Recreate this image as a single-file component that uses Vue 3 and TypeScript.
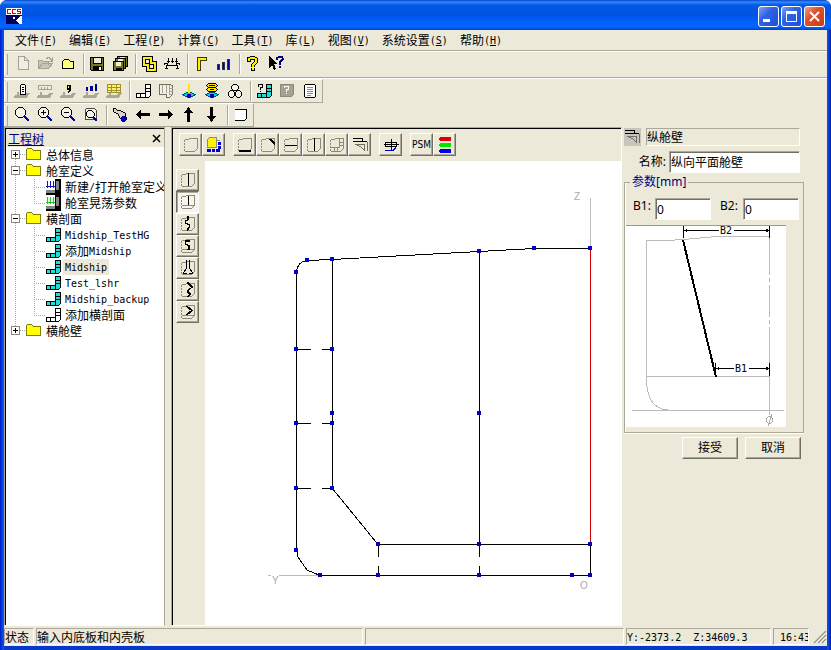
<script setup lang="ts">
import { h, ref } from 'vue'

// fill, stroke, stroke width, path data, optional dash pattern
type Shape = [string, string, number, string, string?]

const K = '#000'
const G = '#a5a294'
const N = 'none'
const Y = '#ffff00'
const B = '#0000a8'
const C = '#00d8d8'

const tray: Shape = ['#aaa794', N, 0, 'M3 9h2v3h6l1-2h4l-3 5H0l1-3h2z']
const lens: Shape[] = [
  [N, B, 2, 'M10 9l5 5'],
  ['#f4f3ea', K, 1, 'M4.500 .5h4l3 3v4l-3 3h-4l-3-3v-4z'],
]
const cellPath = 'M10.500 1.500h5v11l-2 2h-12v-4h9z'
const cellLines: Shape = [N, K, 1, 'M10.500 5.500h5M10.500 8.500h5M10.500 10.500v4M5.500 10.500v4']
const cell: Shape[] = [['#20dcdc', K, 1, cellPath], cellLines]
const whiteCell: Shape[] = [['#fff', K, 1, cellPath], cellLines]
const hull: Shape[] = [
  [N, '#8e8b7c', 1, 'M1.500 3v12', '2 1'],
  [N, '#8e8b7c', 1, 'M2 2.500h4M6 1.500h8.500v10l-3 3H2'],
]
const floor: Shape = [N, '#8e8b7c', 1, 'M2 11.500h12']

const icons: Record<string, Shape[]> = {
  app: [
    ['#fff', N, 0, 'M0 0h16v7H0z'],
    [N, '#e00000', 1, 'M5 1.500H1.500v4H5M10 1.500H6.500v4H10M15 1.500h-3.500v2h3v2H11'],
    ['#00005c', N, 0, 'M0 7h16v9H0z'],
    ['#fff', N, 0, 'M16 8v8h-2l-5-4 3-1 2-3zM7 9h2v2H7z'],
  ],
  file: [['#f0eee4', G, 1, 'M4.500 .5h6l4 4v9h-10zM10.500 .5v4h4']],
  open: [['#c9c6b7', G, 1, 'M1.500 12.500v-8h4l1 1h5v3M1.500 12.500l4-5h10l-4 5z'], [N, G, 1, 'M9 2.500l3-1 3 3M15 1v4h-3']],
  folder: [['#ffff80', K, 1, 'M2.500 12.500v-7l2-2h4l2 2h3v7z']],
  save: [
    ['#77771d', K, 1, 'M1.500 1.500h13v13h-12l-1-1z'],
    ['#eeeade', K, 1, 'M4.500 1.500h8v6h-8z'],
    [K, N, 0, 'M4 10h9v5H4z'],
    ['#fff', N, 0, 'M10 11h2v3h-2z'],
  ],
  saveAll: [
    ['#77771d', K, 1, 'M5.500 .5h10v10h-10z'],
    ['#77771d', K, 1, 'M3.500 2.500h10v10h-10z'],
    ['#77771d', K, 1, 'M1.500 5.500h10v9h-10z'],
    ['#f0eee4', N, 0, 'M8 1h5v1H8zM6 3h5v2H6zM4 6h5v4H4z'],
    [K, N, 0, 'M4 12h6v3H4z'],
  ],
  ribbon: [
    [N, K, 4, 'M3 2h7v5h4v7H7v-5H3z'],
    [N, '#f4ed24', 2, 'M3 2h7v5h4v7H7v-5H3z'],
  ],
  loads: [
    [N, K, 1, 'M.5 9V7.500h3v2h9v-2h3V9M2 9.500h12M2.500 9v4M13.500 9v4M1 12.500h3M12 12.500h3'],
    [N, K, 1, 'M4.500 2v5M8.500 2v5M12.500 2v5M3 5.500h3M7 5.500h3M11 5.500h3'],
  ],
  angle: [['#fff200', '#3c3c00', 1, 'M4.500 1.500h9v3h-6v10h-3z']],
  bars: [['#00009c', '#30304c', 1, 'M1.500 8.500h2v5h-2zM6.500 6.500h2v7h-2zM11.500 3.500h2v10h-2z']],
  help: [
    [N, K, 4, 'M4 6V3l2-1h3l2 1v3l-3 3v2M8 12v3'],
    [N, '#fff200', 2, 'M4 5V3l2-1h3l2 1v3l-3 3v2M8 12v2'],
  ],
  whatsThis: [
    [K, N, 0, 'M1 0l8 8H6l2 5-2 1-2-5-3 3z'],
    [N, '#000080', 2, 'M9 4V2l2-1h3l1 2-3 3v3M12 10v2'],
  ],
  trayDoc: [tray, ['#fff', K, 1, 'M6.500 2.500l1-1h3l1 1v9h-5zM8 4.500h2M8 6.500h2M8 8.500h2']],
  trayRuler: [tray, ['#eceadf', G, 1, 'M1.500 2.500h13v4h-13zM4.500 4v2M7.500 4v2M10.500 4v2']],
  trayNine: [tray, [K, N, 0, 'M7 2h4v5L8 10V8l1-1H7V5z'], [Y, N, 0, 'M8 3h1v2H8z']],
  trayBars: [tray, ['#000090', N, 0, 'M3 4h2v4H3zM7 3h3v5H7zM12 1h2v7h-2z']],
  trayTable: [tray, ['#fff36b', '#9d902d', 1, 'M1.500 1.500h13v8h-13zM1.500 4.500h13M1.500 7.500h13M5.500 1.500v8M10.500 1.500v8']],
  section: whiteCell,
  hullGray: [['#f2f0e8', '#716f64', 1, 'M1.500 1.500h10l3 1v9l-3 3h-3v-3h-7z'], [N, G, 1, 'M4.500 2v8M8.500 2v8M11.500 2v9h3M12 5.500h3M12 8.500h3']],
  beam: [
    [C, '#004c70', 1, 'M6.500 9.500h3l5 2-5 3h-3l-5-3z'],
    ['#ffe600', N, 0, 'M7 1h2v9H7z'],
    ['#0000c0', N, 0, 'M6 11h4v2l-1 2H7l-1-2z'],
  ],
  waves: [
    [C, '#004c70', 1, 'M6.500 9.500h3l5 2-5 3h-3l-5-3z'],
    ['#ffe600', K, 1, 'M4.500 4.500h7l2 2-2 2h-7l-2-2z'],
    ['#ffe600', K, 1, 'M4.500 .5h7l2 2-2 2h-7l-2-2z'],
    [N, K, 1, 'M5 2.500h6M6 6.500h4'],
    ['#0000c0', N, 0, 'M6 11h4v2l-1 2H7l-1-2z'],
  ],
  rings: [['#f4f3ea', K, 1, 'M6.500 1.500h3l2 2v2l-2 2h-3l-2-2v-2zM3.500 7.500h2l2 2v3l-2 2h-2l-2-2v-3zM10.500 7.500h2l2 2v3l-2 2h-2l-2-2v-3z']],
  askCell: [...cell, [N, K, 1, 'M2.500 4V1.500h4v3h-2V7M4.500 8v1']],
  askGray: [['#a5a294', '#8e8b7c', 1, 'M1.500 1.500h13v10l-2 2h-11z'], [N, '#fff', 1, 'M5.500 5V3.500h4v3h-2V9M7.500 10v1']],
  sheet: [['#fff', K, 1, 'M3.500 1.500h9l1 1v11l-1 1h-9l-1-1v-11z'], [N, '#8e8b7c', 1, 'M5 4.500h6M5 6.500h6M5 8.500h6M5 10.500h6M5 12.500h4']],
  zoom: lens,
  zoomIn: [...lens, [N, K, 1, 'M4 5.500h5M6.500 3v5']],
  zoomOut: [...lens, [N, K, 1, 'M4 5.500h5']],
  zoomFit: [
    ['#f4f3ea', '#4c4a42', 1, 'M3.500 1.500h8l2 2v9h-11v-10z'],
    [N, B, 2, 'M10 10l4 4'],
    ['#f4f3ea', K, 1, 'M5.500 3.500h3l3 3v2l-2 2h-4l-2-2v-3z'],
  ],
  pan: [['#d9d7cb', K, 1, 'M1.500 1.500h2l2 2h3l5 3v3l-3 3-3-2-1-3-5-3z'], ['#0000c8', '#000080', 1, 'M10.500 9.500h3l1 1v2l-2 2h-2l-1-1v-3z']],
  left: [[K, N, 0, 'M1 7.500L6 3v3h9v3H6v3z']],
  right: [[K, N, 0, 'M15 7.500L10 3v3H1v3h9v3z']],
  up: [[K, N, 0, 'M7.500 0L12 6H9v9H6V6H3z']],
  down: [[K, N, 0, 'M7.500 15L12 9H9V0H6v9H3z']],
  outline: [['#fff', K, 1, 'M2 2.500h11.500v9l-2 2H2']],
  hull: hull,
  hullFill: [
    ['#fff200', '#8e8b7c', 1, 'M1.500 2.500l2-2h7v10h-9z'],
    [N, '#8e8b7c', 1, 'M10 3.500h4'],
    ['#0000d0', N, 0, 'M12 5h3v3h-3zM12 9h3v3h-3zM10 12h4v3h-4zM6 12h3v3H6zM1 12h4v3H1z'],
  ],
  deckBottom: [...hull, [K, N, 0, 'M2 13h12v2H2z']],
  deckCorner: [...hull, [K, N, 0, 'M9 2h2l4 4v2h-1l-5-5z']],
  deckMid: [...hull, [N, K, 1, 'M2 8.500h12']],
  wall: [...hull, [N, K, 1, 'M8.500 1v13']],
  hullCells: [...hull, [N, '#8e8b7c', 1, 'M10.500 2v8.500H2M11 5.500h4M11 8.500h4M5.500 11v3M8.500 11v3']],
  bracket: [[N, K, 1, 'M1 1.500h9v3h5M1 4.500h9'], [N, '#716f64', 1, 'M3.500 7.500h9v6l-4-4-5-2M15.500 5v9']],
  girder: [[N, K, 1, 'M2.500 5.500h11v4h-11zM1 7.500h15M8.500 2v12'], [N, '#0000c0', 1, 'M2 13.500h8l3-3']],
  rgb: [['#e00000', N, 0, 'M3 0h10l1 1v2l-1 1H3L2 3V1z'], ['#00e800', N, 0, 'M3 6h10l1 1v2l-1 1H3L2 9V7z'], ['#0000d8', N, 0, 'M3 12h10l1 1v2l-1 1H3l-1-1v-2z']],
  wallFloor: [...hull, floor, [N, K, 1, 'M8.500 2v9']],
  corrugated: [...hull, [N, K, 1, 'M7.500 0v4.500h-2v3l4 1v3l-2 1V15M8.500 0v4M8.500 12v2']],
  corrugatedFloor: [...hull, floor, [N, K, 1, 'M9.500 2.500h-4v4l4 1v4h-3M10 3.500H6M8.500 8v3']],
  stool: [...hull, [N, K, 1, 'M6.500 0v8l-3 5M9.500 0v8l3 5M3 13.500h4M9 13.500h4']],
  chain: [...hull, [N, K, 1, 'M7.500 0l5 5-5 4 3 3-3 3M7.500 1l4 4M10 6l-3 3 2 3']],
  chainFloor: [...hull, floor, [N, K, 1, 'M6.500 2.500l5 4-5 4M7.500 2.500l5 4-5 4']],
  closedFolder: [['#ffff00', '#817c10', 1, 'M.5 12.500v-10l1-1h4l2 2h7v9z']],
  tankBlue: [[K, N, 0, 'M10 0h6v16H1v-5h9z'], ['#858585', N, 0, 'M11 2h3v9h-3zM1 11h9v3H1z'], [N, '#1414c0', 1, 'M2.500 2v7M5.500 2v7M8.500 2v7M1 7.500h9']],
  tankGreen: [[K, N, 0, 'M10 0h6v16H1v-5h9z'], ['#858585', N, 0, 'M11 2h3v9h-3zM1 11h9v3H1z'], [N, '#18cc18', 1, 'M2.500 2v7M5.500 2v7M8.500 2v7M1 7.500h9']],
  cell,
  whiteCell,
}

const Icon = (props: { name: string }) =>
  h(
    'svg',
    { width: 16, height: 16, viewBox: '0 0 16 16', 'shape-rendering': 'crispEdges', 'aria-hidden': 'true' },
    (icons[props.name] ?? []).map(([fill, stroke, width, d, dash]) =>
      h('path', { d, fill, stroke, 'stroke-width': width, 'stroke-dasharray': dash || undefined }),
    ),
  )
Icon.props = ['name']

// Latin runs are set at half the width of a Chinese character.
const Txt = (props: { text: string }) =>
  h(
    'span',
    (props.text.match(/[\x20-\x7e]+|[^\x20-\x7e]+/g) ?? []).map((run) =>
      /^[\x20-\x7e]/.test(run) ? h('span', { class: 'half' }, run) : run,
    ),
  )
Txt.props = ['text']

const menus = [
  ['文件', 'F'], ['编辑', 'E'], ['工程', 'P'], ['计算', 'C'], ['工具', 'T'],
  ['库', 'L'], ['视图', 'V'], ['系统设置', 'S'], ['帮助', 'H'],
]

const toolbars: { boxed: boolean; groups: string[][] }[] = [
  { boxed: false, groups: [['file', 'open', 'folder'], ['save', 'saveAll'], ['ribbon', 'loads'], ['angle', 'bars'], ['help', 'whatsThis']] },
  { boxed: true, groups: [['trayDoc', 'trayRuler', 'trayNine', 'trayBars', 'trayTable'], ['section', 'hullGray', 'beam', 'waves', 'rings'], ['askCell', 'askGray', 'sheet']] },
  { boxed: true, groups: [['zoom', 'zoomIn', 'zoomOut', 'zoomFit'], ['pan', 'left', 'right', 'up', 'down'], ['outline']] },
]

const viewTools = [['hull', 'hullFill'], ['deckBottom', 'deckCorner', 'deckMid', 'wall', 'hullCells', 'bracket'], ['girder'], ['PSM', 'rgb']]
const sideTools = ['wall', 'wallFloor', 'corrugated', 'corrugatedFloor', 'stool', 'chain', 'chainFloor']
const activeTool = ref('wallFloor')

interface Leaf { label: string; icon: string }
const tree: { label: string; open: boolean; items: Leaf[] }[] = [
  { label: '总体信息', open: false, items: [] },
  { label: '舱室定义', open: true, items: [{ label: '新建/打开舱室定义', icon: 'tankBlue' }, { label: '舱室晃荡参数', icon: 'tankGreen' }] },
  {
    label: '横剖面',
    open: true,
    items: [
      { label: 'Midship_TestHG', icon: 'cell' },
      { label: '添加Midship', icon: 'cell' },
      { label: 'Midship', icon: 'cell' },
      { label: 'Test_lshr', icon: 'cell' },
      { label: 'Midship_backup', icon: 'cell' },
      { label: '添加横剖面', icon: 'whiteCell' },
    ],
  },
  { label: '横舱壁', open: false, items: [] },
]
const selected = ref('Midship')

const points = [
  [307, 260], [332, 259], [296, 272], [479, 251], [534, 248], [590, 248],
  [296, 349], [332, 349], [332, 413], [479, 413], [296, 423], [332, 423],
  [296, 488], [332, 488], [296, 550], [320, 575], [378, 544], [479, 544],
  [590, 544], [378, 575], [479, 575], [572, 575], [590, 575],
]

const name = ref('纵向平面舱壁')
const b1 = ref('0')
const b2 = ref('0')
</script>

<template>
  <div class="window">
    <header class="title">
      <Icon name="app" />
      <div class="caption">
        <button type="button" aria-label="最小化"><svg width="19" height="19" viewBox="0 0 19 19"><path d="M4 12h7v3H4z" fill="#fff" /></svg></button>
        <button type="button" aria-label="最大化"><svg width="19" height="19" viewBox="0 0 19 19"><path d="M4.500 5v9.500h10V5" fill="none" stroke="#fff" /><path d="M4 4h11v3H4z" fill="#fff" /></svg></button>
        <button type="button" class="close" aria-label="关闭"><svg width="19" height="19" viewBox="0 0 19 19"><path d="M5 5l9 9M14 5l-9 9" stroke="#fff" stroke-width="2" /></svg></button>
      </div>
    </header>

    <div class="client">
      <nav class="menu">
        <button v-for="m in menus" :key="m[1]" type="button">{{ m[0] }}<span class="half">(<u>{{ m[1] }}</u>)</span></button>
      </nav>

      <div v-for="(bar, i) in toolbars" :key="i" class="toolbar" :class="{ boxed: bar.boxed }" role="toolbar">
        <div v-for="(group, j) in bar.groups" :key="j" class="group">
          <button v-for="t in group" :key="t" type="button" :aria-label="t"><Icon :name="t" /></button>
        </div>
      </div>

      <main class="work">
        <aside class="tree">
          <div class="tree-head">
            <a href="#">工程树</a>
            <button type="button" aria-label="关闭工程树"><svg width="9" height="9" viewBox="0 0 9 9"><path d="M1 1l7 7M8 1l-7 7" stroke="#000" stroke-width="1.500" /></svg></button>
          </div>
          <ul class="nodes">
            <li v-for="(node, i) in tree" :key="node.label" :class="{ linked: i < tree.length - 1 }">
              <div class="node">
                <svg class="toggle" width="19" height="16" viewBox="0 0 19 16" shape-rendering="crispEdges">
                  <path d="M13 7.500h6" stroke="#aaa" stroke-dasharray="1 1" />
                  <path d="M4.500 3.500h8v8h-8z" fill="#fff" stroke="#8e8b7c" />
                  <path :d="node.open ? 'M6 7.500h5' : 'M6 7.500h5M8.500 5v5'" stroke="#000" />
                </svg>
                <Icon name="closedFolder" />
                <Txt class="label" :text="node.label" />
              </div>
              <ul v-if="node.items.length">
                <li v-for="leaf in node.items" :key="leaf.label" class="leaf" @click="selected = leaf.label">
                  <Icon :name="leaf.icon" />
                  <Txt class="label" :class="{ selected: selected === leaf.label }" :text="leaf.label" />
                </li>
              </ul>
            </li>
          </ul>
        </aside>

        <section class="view">
          <div class="view-tools">
            <div v-for="(group, i) in viewTools" :key="i" class="view-group">
              <button v-for="t in group" :key="t" type="button" class="tool" :aria-label="t">
                <span v-if="t === 'PSM'" class="psm">PSM</span>
                <Icon v-else :name="t" />
              </button>
            </div>
          </div>
          <div class="view-body">
            <div class="side-tools">
              <button v-for="t in sideTools" :key="t" type="button" class="tool" :class="{ pressed: activeTool === t }" :aria-label="t" @click="activeTool = t">
                <Icon :name="t" />
              </button>
            </div>
            <div class="canvas">
              <svg width="416" height="464" viewBox="205 161 416 464" shape-rendering="crispEdges" fill="none">
                <path d="M590.500 198v50M268 575.500h3M279 575.500h42" stroke="#bbb" />
                <g fill="#aaa" class="axis">
                  <text x="574" y="200">Z</text><text x="272" y="584">Y</text><text x="580" y="589">O</text>
                </g>
                <path d="M590.500 248v296" stroke="#d00000" />
                <path
                  d="M296.500 272v278M332.500 259v229M479.500 251v306M479.500 566v9M378.500 544v13M378.500 566v9M590.500 544v31M378 544.500h212M320 575.500h270M534 248.500h56M307 260.500L332 259.500L479 251.500L534 248.500M296.500 272Q297 262 307 260.500M296.500 550L298 557L307 570L320 575.500M332 488L378 544.500M296 349.500h15M322 349.500h10M296 423.500h15M322 423.500h10M296 488.500h15M322 488.500h10"
                  stroke="#000"
                />
                <rect v-for="(p, i) in points" :key="i" :x="p[0] - 2" :y="p[1] - 2" width="4" height="4" fill="#0000c8" />
              </svg>
            </div>
          </div>
        </section>

        <aside class="props">
          <div class="props-head">
            <span class="props-icon"><Icon name="bracket" /></span>
            <span class="props-title">纵舱壁</span>
          </div>
          <div class="name-row">
            <label for="name">名称:</label>
            <input id="name" v-model="name" type="text" />
          </div>
          <fieldset>
            <legend>参数[mm]</legend>
            <div class="dims">
              <label for="b1">B1:</label>
              <input id="b1" v-model="b1" type="text" />
              <label for="b2">B2:</label>
              <input id="b2" v-model="b2" type="text" />
            </div>
            <svg class="sketch" width="160" height="202" viewBox="626 225 160 202" shape-rendering="crispEdges" fill="none">
              <path d="M626 225.500h160" stroke="#999" />
              <path d="M646.500 240v142c1 18 9 27 21 28M646 240.500h22l15-1 34-3h53M646 376.500h124M632 410.500h152" stroke="#bbb" />
              <path d="M769.500 237v38M769.500 278v4M769.500 285v32M769.500 320v4M769.500 327v88" stroke="#bbb" />
              <path d="M683.500 226v12M769.500 226v12M683 230.500h36M734 230.500h36M715.500 363v13M769.500 363v13M716 368.500h18M749 368.500h21" stroke="#000" />
              <path d="M684 230.500l3-2v4zM769 230.500l-3-2v4zM716 368.500l3-2v4zM769 368.500l-3-2v4z" fill="#000" />
              <path d="M683 240L716 377" stroke="#000" stroke-width="2" />
              <g fill="#000" class="dim"><text x="720" y="234">B2</text><text x="735" y="372">B1</text></g>
              <path d="M768.500 416.500h2l2 2v3l-2 2h-2l-2-2v-3zM772 414l-4 12" stroke="#aaa" />
            </svg>
          </fieldset>
          <div class="actions">
            <button type="button">接受</button>
            <button type="button">取消</button>
          </div>
        </aside>
      </main>

      <footer class="status">
        <span>状态</span>
        <span>输入内底板和内壳板</span>
        <span></span>
        <span class="coords"><Txt text="Y:-2373.2  Z:34609.3" /></span>
        <span class="clock"><Txt text="16:43" /></span>
        <svg width="16" height="16" viewBox="0 0 16 16"><path d="M3 15L15 3M7 15l8-8M11 15l4-4" stroke="#9d9a8a" stroke-width="1.500" /><path d="M5 15L15 5M9 15l6-6M13 15l2-2" stroke="#fff" /></svg>
      </footer>
    </div>
  </div>
</template>

<style>
body {
  margin: 0;
  background: #fff;
}
.half {
  font-family: "DejaVu Sans Mono", monospace;
  font-size: 10px;
  line-height: 12px;
  vertical-align: 1px;
  white-space: pre;
}
</style>

<style scoped>
* {
  box-sizing: border-box;
}
.window {
  height: 100vh;
  min-height: 500px;
  display: flex;
  flex-direction: column;
  overflow: hidden;
  border-radius: 7px 7px 0 0;
  background: linear-gradient(90deg, #0019cf, #0a50e8 3px, #0a50e8 calc(100% - 3px), #0019a8);
  font: 12px/16px "Noto Sans CJK SC", sans-serif;
  color: #000;
}
button {
  font: inherit;
  color: inherit;
  padding: 0;
  border: 0;
  background: none;
}
svg {
  display: block;
  flex: none;
}
ul {
  margin: 0;
  padding: 0;
  list-style: none;
}
.title {
  flex: none;
  height: 30px;
  padding: 2px 6px 0 6px;
  display: flex;
  align-items: center;
  justify-content: space-between;
  background: linear-gradient(#0842c8, #2f8cff 2px, #0558e4 5px, #0052e0 14px, #0062ff 22px, #0066ff 27px, #0040c8);
}
.caption {
  display: flex;
  gap: 2px;
}
.caption button {
  width: 21px;
  height: 21px;
  border: 1px solid #fff;
  border-radius: 3px;
  background: linear-gradient(135deg, #7ea2f4, #2f62e4 40%, #1c4fd8);
}
.caption .close {
  background: linear-gradient(135deg, #f0a084, #e0502c 40%, #c83c14);
}
.client {
  flex: 1;
  min-height: 0;
  margin: 0 4px 4px;
  display: flex;
  flex-direction: column;
  background: #ece9d8;
  box-shadow: 0 4px #0838c8;
}
.menu {
  flex: none;
  display: flex;
  height: 22px;
  padding: 1px 5px 0;
  border-bottom: 1px solid #fff;
  box-shadow: inset 0 -1px #aca899;
}
.menu button {
  height: 18px;
  padding: 0 6px;
  white-space: nowrap;
}
.toolbar {
  flex: none;
  display: flex;
  height: 27px;
  padding: 0 0 2px 7px;
  border-bottom: 1px solid #fff;
  background: linear-gradient(90deg, #fff 1px, transparent 1px 3px, #aca899 3px 4px, transparent 4px) 0 2px / 100% 21px no-repeat;
  box-shadow: inset 0 -1px #aca899;
}
.toolbar.boxed {
  align-self: flex-start;
  height: 24px;
  padding-bottom: 0;
  border-right: 1px solid #aca899;
  border-bottom: 1px solid #aca899;
  border-top: 1px solid #fff;
  box-shadow: none;
}
.group {
  display: flex;
  align-items: center;
}
.group + .group {
  padding-left: 5px;
  margin-left: 1px;
  background: linear-gradient(90deg, #aca899 1px, #fff 1px, #fff 2px, transparent 2px) 2px 50% / 100% 20px no-repeat;
}
.group button {
  width: 23px;
  height: 22px;
  padding-left: 3px;
}
.work {
  flex: 1;
  min-height: 0;
  display: flex;
  padding-bottom: 2px;
}
.tree {
  flex: none;
  width: 161px;
  margin-right: 6px;
  display: flex;
  flex-direction: column;
  overflow: hidden;
  border: 1px solid #aca899;
  border-bottom-color: #fff;
  box-shadow: inset 1px 1px #000;
}
.tree-head {
  flex: none;
  height: 18px;
  margin: 1px 0 0 1px;
  padding: 1px 3px 0 2px;
  display: flex;
  align-items: center;
  justify-content: space-between;
}
.tree-head a {
  color: #000080;
}
.nodes {
  flex: 1;
  margin-left: 1px;
  background: #fff;
}
.nodes > li {
  background: repeating-linear-gradient(#aaa 0 1px, #fff 1px 2px) 9px 0 / 1px 100% no-repeat;
}
.nodes > li:first-child {
  background-position-y: 8px;
}
.nodes > li:last-child {
  background-size: 1px 8px;
}
.node {
  display: flex;
  padding-left: 1px;
}
.label {
  flex: none;
  height: 16px;
  margin-left: 2px;
  padding: 0 2px;
  white-space: nowrap;
}
.leaf {
  display: flex;
  margin-left: 28px;
  padding-left: 11px;
  background:
    repeating-linear-gradient(90deg, #aaa 0 1px, #fff 1px 2px) 0 8px / 11px 1px no-repeat,
    repeating-linear-gradient(#aaa 0 1px, #fff 1px 2px) 0 0 / 1px 100% no-repeat;
}
.leaf:last-child {
  background-size: 11px 1px, 1px 8px;
}
.leaf .label {
  margin-left: 2px;
}
.leaf .selected {
  background: #ece9d8;
}
.view {
  flex: 1;
  min-width: 0;
  display: flex;
  flex-direction: column;
  border: 1px solid #aca899;
  border-right-color: #fff;
  border-bottom-color: #fff;
  box-shadow: inset 1px 1px #000;
  padding: 1px 0 0 1px;
}
.view-tools {
  flex: none;
  height: 32px;
  padding: 4px 6px;
  display: flex;
  gap: 8px;
}
.view-group {
  display: flex;
}
.tool {
  width: 23px;
  height: 23px;
  display: grid;
  place-items: center;
  border: 1px solid #fff;
  border-right-color: #716f64;
  border-bottom-color: #716f64;
  box-shadow: inset -1px -1px #aca899;
}
.tool.pressed {
  border-color: #716f64 #fff #fff #716f64;
  box-shadow: inset 1px 1px #aca899;
  background: #f6f4ec;
}
.psm {
  font: 10px/16px "DejaVu Sans Condensed", "Open Sans", sans-serif;
}
.view-body {
  flex: 1;
  min-height: 0;
  display: flex;
}
.side-tools {
  flex: none;
  width: 32px;
  padding: 8px 3px;
}
.side-tools .tool {
  height: 22px;
}
.canvas {
  flex: 1;
  min-width: 0;
  overflow: hidden;
  background: #fff;
}
.axis {
  font: 10px "Liberation Sans", sans-serif;
}
.dim {
  font: 10px "DejaVu Sans Mono", monospace;
}
.props {
  flex: none;
  width: 205px;
  padding: 1px 23px 0 2px;
  font-family: "Noto Sans", "Noto Sans CJK SC", sans-serif;
}
.props-head {
  display: flex;
  gap: 5px;
  padding-right: 4px;
}
.props-icon {
  width: 17px;
  height: 18px;
  padding-top: 1px;
  background: #c8c6bc;
}
.props-title {
  flex: 1;
  height: 18px;
  line-height: 17px;
  border: 1px solid #aca899;
  border-right-color: #fff;
  border-bottom-color: #fff;
}
.name-row {
  display: flex;
  align-items: center;
  justify-content: flex-end;
  gap: 3px;
  padding: 5px 4px 0 0;
}
input {
  min-width: 0;
  height: 22px;
  padding: 0 1px 0 1px;
  border: 1px solid #aca899;
  border-right-color: #fff;
  border-bottom-color: #fff;
  box-shadow: inset 1px 1px #716f64;
  background: #fff;
  font: inherit;
  border-radius: 0;
}
.name-row input {
  width: 131px;
}
fieldset {
  min-width: 0;
  margin: 1px 0 0;
  padding: 0 0 5px 1px;
  border: 1px solid #aca899;
  box-shadow: inset 1px 0 #fff, 0 1px #fff;
}
legend {
  height: 16px;
  margin-left: 4px;
  padding: 0 2px;
  color: #000080;
}
.dims {
  display: grid;
  grid-template-columns: 22px 56px 32px 56px;
  padding: 8px 4px 5px 7px;
}
.dims label:nth-of-type(2) {
  padding-left: 9px;
}
.sketch {
  background: #fff;
}
.actions {
  display: flex;
  justify-content: flex-end;
  gap: 7px;
  padding: 4px 3px 0 0;
}
.actions button {
  width: 56px;
  height: 22px;
  border: 1px solid #fff;
  border-right-color: #716f64;
  border-bottom-color: #716f64;
  box-shadow: inset -1px -1px #aca899;
}
.status {
  flex: none;
  display: grid;
  grid-template-columns: 30px 327px minmax(0, 1fr) 145px 36px 16px;
  column-gap: 2px;
  height: 18px;
}
.status > span {
  height: 17px;
  overflow: hidden;
  white-space: nowrap;
  border: 1px solid #aca899;
  border-right-color: #fff;
  border-bottom-color: #fff;
}
.status .clock {
  padding-left: 6px;
}
</style>
